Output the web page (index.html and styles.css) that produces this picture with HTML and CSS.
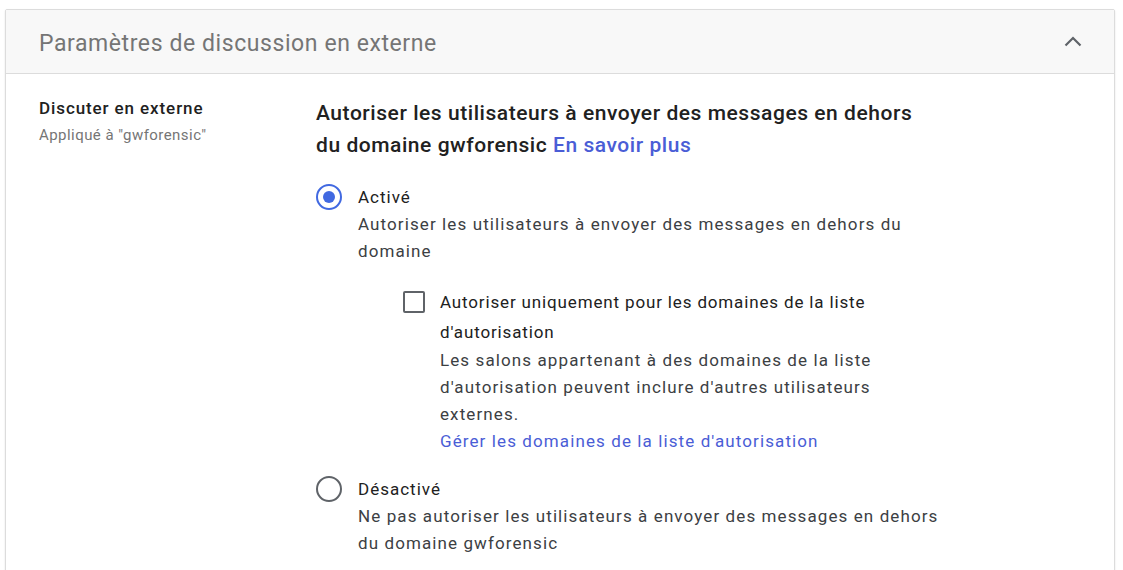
FILE: index.html
```html
<!DOCTYPE html>
<html lang="fr">
<head>
<meta charset="utf-8">
<link rel="stylesheet" href="styles.css">
</head>
<body>
<div class="card">
  <div class="card-header">
    <div class="card-title">Paramètres de discussion en externe</div>
    <svg class="chevron" width="20" height="12" viewBox="0 0 20 12"><polyline points="1.5,10.5 9,3 16.5,10.5" fill="none" stroke="#5f6368" stroke-width="2.2"/></svg>
  </div>
  <div class="card-body">
    <div class="side">
      <div class="side-title">Discuter en externe</div>
      <div class="side-sub">Appliqué à "gwforensic"</div>
    </div>
    <div class="main">
      <div class="heading">Autoriser les utilisateurs à envoyer des messages en dehors du domaine gwforensic <a class="link" href="#">En savoir plus</a></div>

      <div class="option">
        <span class="radio checked"><span class="dot"></span></span>
        <div class="option-text">
          <div class="label">Activé</div>
          <div class="desc">Autoriser les utilisateurs à envoyer des messages en dehors du domaine</div>
          <div class="sub-option">
            <span class="checkbox"></span>
            <div class="sub-text">
              <div class="cb-label">Autoriser uniquement pour les domaines de la liste d'autorisation</div>
              <div class="desc">Les salons appartenant à des domaines de la liste d'autorisation peuvent inclure d'autres utilisateurs externes.</div>
              <a class="link small" href="#">Gérer les domaines de la liste d'autorisation</a>
            </div>
          </div>
        </div>
      </div>

      <div class="option second">
        <span class="radio"></span>
        <div class="option-text">
          <div class="label">Désactivé</div>
          <div class="desc">Ne pas autoriser les utilisateurs à envoyer des messages en dehors du domaine gwforensic</div>
        </div>
      </div>
    </div>
  </div>
</div>
</body>
</html>
```

FILE: styles.css
```css
html, body {
  margin: 0;
  padding: 0;
  background: #ffffff;
}
body {
  font-family: Roboto, "Liberation Sans", Arial, sans-serif;
  padding: 9px 8px 0 5px;
  overflow: hidden;
  height: 570px;
  box-sizing: border-box;
}
.card {
  width: 1110px;
  box-sizing: border-box;
  border: 1px solid #dcdcdc;
  border-radius: 2px;
  box-shadow: 0 1px 2px rgba(0,0,0,0.12);
  background: #fff;
  min-height: 600px;
}
.card-header {
  height: 63px;
  background: #f8f8f8;
  border-bottom: 1px solid #dcdcdc;
  display: flex;
  align-items: center;
  justify-content: space-between;
  padding: 0 30px 0 33px;
}
.card-title {
  font-size: 23px;
  color: #757575;
  font-weight: 400;
  letter-spacing: 0.58px;
  margin-top: 4px;
}
.chevron {
  display: block;
  margin-top: -2px;
}
.card-body {
  display: flex;
  padding: 22px 0 0 33px;
}
.side {
  width: 277px;
  flex: none;
}
.side-title {
  font-size: 17px;
  line-height: 24px;
  font-weight: 500;
  color: #212121;
  letter-spacing: 0.9px;
}
.side-sub {
  font-size: 15px;
  line-height: 20px;
  color: #757575;
  margin-top: 5px;
  letter-spacing: 0.45px;
}
.main {
  width: 660px;
}
.heading {
  font-size: 21px;
  line-height: 32px;
  font-weight: 500;
  color: #212121;
  max-width: 610px;
  margin-top: 1px;
  letter-spacing: 0.55px;
}
.link {
  color: #4a5dd6;
  text-decoration: none;
}
.option {
  display: flex;
  margin-top: 22px;
}
.option.second {
  margin-top: 20px;
}
.radio {
  width: 26px;
  height: 26px;
  box-sizing: border-box;
  border: 2px solid #5f6368;
  border-radius: 50%;
  flex: none;
  margin-top: 1px;
  display: flex;
  align-items: center;
  justify-content: center;
}
.radio.checked {
  border-color: #4169e1;
}
.radio .dot {
  width: 12px;
  height: 12px;
  border-radius: 50%;
  background: #4169e1;
}
.option-text {
  margin-left: 16px;
}
.label {
  font-size: 17px;
  line-height: 28px;
  color: #212121;
  letter-spacing: 1px;
}
.desc {
  font-size: 17px;
  line-height: 27px;
  color: #3c4043;
  max-width: 590px;
  letter-spacing: 1.1px;
}
.sub-option {
  display: flex;
  margin-top: 22px;
  margin-left: 45px;
}
.checkbox {
  width: 22px;
  height: 22px;
  box-sizing: border-box;
  border: 2px solid #5f6368;
  border-radius: 2px;
  flex: none;
  margin-top: 4px;
}
.sub-text {
  margin-left: 15px;
  width: 480px;
}
.cb-label {
  font-size: 17px;
  line-height: 30px;
  color: #212121;
  letter-spacing: 0.85px;
}
.link.small {
  display: block;
  font-size: 17px;
  line-height: 27px;
  letter-spacing: 1.1px;
}
```
